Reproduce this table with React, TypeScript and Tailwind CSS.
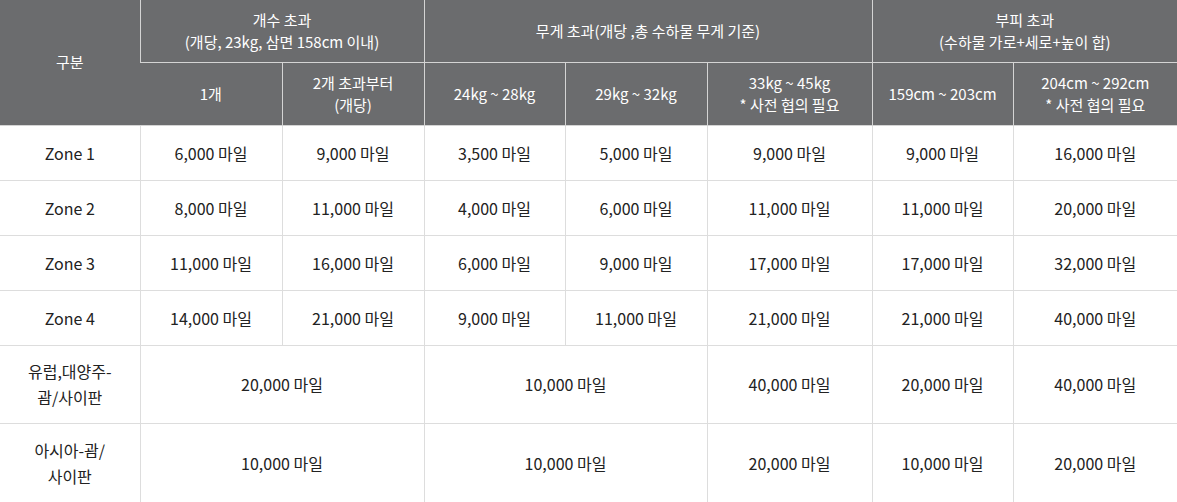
import React from "react";

const th = "border-l border-b border-[#d4d4d4] font-normal text-white text-[15px] text-center align-middle leading-[22px] first:border-l-0";
const td = "border-l border-b border-[#dddddd] text-center align-middle text-[16px] leading-[26px] first:border-l-0";

const zones = [
  ["Zone 1", "6,000 마일", "9,000 마일", "3,500 마일", "5,000 마일", "9,000 마일", "9,000 마일", "16,000 마일"],
  ["Zone 2", "8,000 마일", "11,000 마일", "4,000 마일", "6,000 마일", "11,000 마일", "11,000 마일", "20,000 마일"],
  ["Zone 3", "11,000 마일", "16,000 마일", "6,000 마일", "9,000 마일", "17,000 마일", "17,000 마일", "32,000 마일"],
  ["Zone 4", "14,000 마일", "21,000 마일", "9,000 마일", "11,000 마일", "21,000 마일", "21,000 마일", "40,000 마일"],
];

const App = () => {
  return (
    <div className="w-[1177px] h-[502px] overflow-hidden bg-white text-[#222] font-['Noto_Sans_CJK_KR','Noto_Sans',sans-serif]">
      <table className="w-[1177px] table-fixed border-collapse">
        <colgroup>
          <col className="w-[140px]" />
          <col className="w-[142px]" />
          <col className="w-[142px]" />
          <col className="w-[141px]" />
          <col className="w-[142px]" />
          <col className="w-[165px]" />
          <col className="w-[141px]" />
          <col className="w-[164px]" />
        </colgroup>
        <thead className="bg-[#6b6c6e]">
          <tr className="h-[62px]">
            <th rowSpan={2} className={th}>구분</th>
            <th colSpan={2} className={th}>
              개수 초과
              <br />
              (개당, 23kg, 삼면 158cm 이내)
            </th>
            <th colSpan={3} className={th}>무게 초과(개당 ,총 수하물 무게 기준)</th>
            <th colSpan={2} className={th}>
              부피 초과
              <br />
              (수하물 가로+세로+높이 합)
            </th>
          </tr>
          <tr className="h-[63px]">
            <th className={th}>1개</th>
            <th className={th}>
              2개 초과부터
              <br />
              (개당)
            </th>
            <th className={th}>24kg ~ 28kg</th>
            <th className={th}>29kg ~ 32kg</th>
            <th className={th}>
              33kg ~ 45kg
              <br />* 사전 협의 필요
            </th>
            <th className={th}>159cm ~ 203cm</th>
            <th className={th}>
              204cm ~ 292cm
              <br />* 사전 협의 필요
            </th>
          </tr>
        </thead>
        <tbody>
          {zones.map((row) => (
            <tr key={row[0]} className="h-[55px]">
              {row.map((c, i) => (
                <td key={i} className={td}>{c}</td>
              ))}
            </tr>
          ))}
          <tr className="h-[78px]">
            <td className={td}>
              유럽,대양주-
              <br />
              괌/사이판
            </td>
            <td colSpan={2} className={td}>20,000 마일</td>
            <td colSpan={2} className={td}>10,000 마일</td>
            <td className={td}>40,000 마일</td>
            <td className={td}>20,000 마일</td>
            <td className={td}>40,000 마일</td>
          </tr>
          <tr className="h-[79px]">
            <td className={td}>
              아시아-괌/
              <br />
              사이판
            </td>
            <td colSpan={2} className={td}>10,000 마일</td>
            <td colSpan={2} className={td}>10,000 마일</td>
            <td className={td}>20,000 마일</td>
            <td className={td}>10,000 마일</td>
            <td className={td}>20,000 마일</td>
          </tr>
        </tbody>
      </table>
    </div>
  );
};

export default App;
